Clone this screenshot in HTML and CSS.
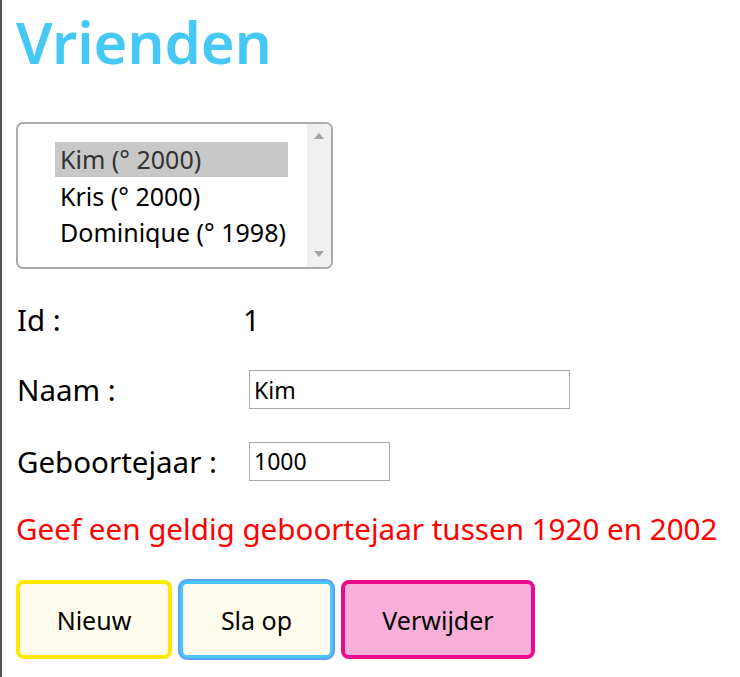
FILE: index.html
```html
<!DOCTYPE html>
<html lang="nl">
<head>
<meta charset="utf-8">
<title>Vrienden</title>
<link rel="stylesheet" href="styles.css">
</head>
<body>
<main class="page">
  <h1 class="title">Vrienden</h1>

  <div class="listbox">
    <ul class="options">
      <li class="option selected">Kim (° 2000)</li>
      <li class="option">Kris (° 2000)</li>
      <li class="option">Dominique (° 1998)</li>
    </ul>
    <div class="scrollbar">
      <svg class="arrow" width="12" height="8" viewBox="0 0 12 8"><path d="M1 7 L6 1 L11 7 Z" fill="#a3a3a3"/></svg>
      <svg class="arrow" width="12" height="8" viewBox="0 0 12 8"><path d="M1 1 L6 7 L11 1 Z" fill="#a3a3a3"/></svg>
    </div>
  </div>

  <div class="form">
    <span class="label">Id :</span>
    <span class="value">1</span>

    <span class="label">Naam :</span>
    <input class="field field-name" type="text" value="Kim">

    <span class="label">Geboortejaar :</span>
    <input class="field field-year" type="text" value="1000">
  </div>

  <p class="error">Geef een geldig geboortejaar tussen 1920 en 2002</p>

  <div class="buttons">
    <button class="btn btn-new">Nieuw</button>
    <button class="btn btn-save">Sla op</button>
    <button class="btn btn-delete">Verwijder</button>
  </div>
</main>
</body>
</html>
```

FILE: styles.css
```css
html, body {
  margin: 0;
  padding: 0;
  background: #ffffff;
}

body {
  font-family: "Noto Sans", "Open Sans", sans-serif;
  color: #000;
  border-left: 2px solid #555555;
  min-height: 677px;
  box-sizing: border-box;
}

.page {
  padding: 0 0 0 14px;
}

.title {
  margin: 0;
  padding-top: 0;
  font-size: 58px;
  font-weight: 600;
  line-height: 84px;
  color: #45c8f5;
}

.listbox {
  margin-top: 38px;
  width: 317px;
  height: 147px;
  box-sizing: border-box;
  border: 2px solid #aaaaaa;
  border-radius: 7px;
  display: flex;
  overflow: hidden;
}

.options {
  list-style: none;
  margin: 0;
  padding: 18px 19px 0 37px;
  flex: 1;
}

.option {
  height: 36px;
  line-height: 36px;
  padding-left: 5px;
  font-size: 25px;
  white-space: nowrap;
}

.option.selected {
  background: #c8c8c8;
  color: #333333;
  height: 35px;
  line-height: 35px;
  margin-bottom: 1px;
}

.scrollbar {
  width: 24px;
  background: #f0f0f0;
  display: flex;
  flex-direction: column;
  justify-content: space-between;
  align-items: center;
  padding: 8px 0 9px;
}

.form {
  display: grid;
  grid-template-columns: 227px auto;
  grid-template-rows: 69px 71px 72px;
  align-items: center;
  margin-top: 16px;
  justify-items: start;
}

.label {
  font-size: 29.5px;
  padding-left: 1px;
}

.value {
  font-size: 29.5px;
}

.field {
  margin-left: 6px;
  height: 39px;
  box-sizing: border-box;
  border: 1px solid #aaaaaa;
  border-radius: 0;
  font-family: "Noto Sans", "Open Sans", sans-serif;
  font-size: 23px;
  padding: 0 4px;
  color: #000;
  outline: none;
}

.field-name {
  width: 321px;
}

.field-year {
  width: 141px;
}

.error {
  margin: 13px 0 0;
  font-size: 29.6px;
  color: #ff0000;
  line-height: 38px;
}

.buttons {
  display: flex;
  gap: 7px;
  margin-top: 32px;
}

.btn {
  font-family: "Noto Sans", "Open Sans", sans-serif;
  font-size: 25px;
  color: #000;
  height: 79px;
  padding: 0;
  border-radius: 8px;
  border: 4px solid;
  background: #fffcee;
}

.btn-new {
  width: 156px;
  border-color: #ffe800;
}

.btn-save {
  width: 155px;
  border-color: #45c8f5;
  outline: 2px solid #5f9cff;
  outline-offset: -1px;
}

.btn-delete {
  width: 194px;
  border-color: #ea0a8c;
  background: #f8b0da;
}
```
